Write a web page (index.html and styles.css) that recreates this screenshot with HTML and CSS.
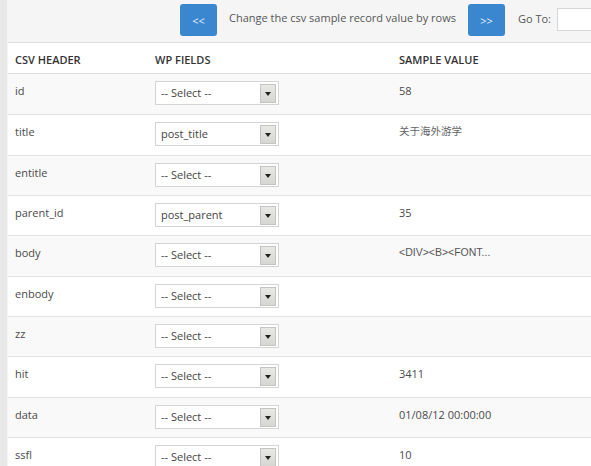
FILE: index.html
```html
<!DOCTYPE html>
<html>
<head>
<meta charset="utf-8">
<link rel="stylesheet" href="styles.css">
</head>
<body>
<div class="frame">
  <div class="toolbar">
    <button class="nav-btn">&lt;&lt;</button>
    <span class="hint">Change the csv sample record value by rows</span>
    <button class="nav-btn">&gt;&gt;</button>
    <span class="goto-label">Go To:</span>
    <input class="goto-input" type="text">
  </div>
  <div class="table">
    <div class="row head">
      <div class="cell c1">CSV HEADER</div>
      <div class="cell c2">WP FIELDS</div>
      <div class="cell c3">SAMPLE VALUE</div>
    </div>
    <div class="row odd">
      <div class="cell c1">id</div>
      <div class="cell c2"><div class="sel"><span>-- Select --</span><i class="arr"></i></div></div>
      <div class="cell c3">58</div>
    </div>
    <div class="row">
      <div class="cell c1">title</div>
      <div class="cell c2"><div class="sel"><span>post_title</span><i class="arr"></i></div></div>
      <div class="cell c3 cjk">关于海外游学</div>
    </div>
    <div class="row odd">
      <div class="cell c1">entitle</div>
      <div class="cell c2"><div class="sel"><span>-- Select --</span><i class="arr"></i></div></div>
      <div class="cell c3"></div>
    </div>
    <div class="row">
      <div class="cell c1">parent_id</div>
      <div class="cell c2"><div class="sel"><span>post_parent</span><i class="arr"></i></div></div>
      <div class="cell c3">35</div>
    </div>
    <div class="row odd">
      <div class="cell c1">body</div>
      <div class="cell c2"><div class="sel"><span>-- Select --</span><i class="arr"></i></div></div>
      <div class="cell c3 html">&lt;DIV&gt;&lt;B&gt;&lt;FONT...</div>
    </div>
    <div class="row">
      <div class="cell c1">enbody</div>
      <div class="cell c2"><div class="sel"><span>-- Select --</span><i class="arr"></i></div></div>
      <div class="cell c3"></div>
    </div>
    <div class="row odd">
      <div class="cell c1">zz</div>
      <div class="cell c2"><div class="sel"><span>-- Select --</span><i class="arr"></i></div></div>
      <div class="cell c3"></div>
    </div>
    <div class="row">
      <div class="cell c1">hit</div>
      <div class="cell c2"><div class="sel"><span>-- Select --</span><i class="arr"></i></div></div>
      <div class="cell c3">3411</div>
    </div>
    <div class="row odd">
      <div class="cell c1">data</div>
      <div class="cell c2"><div class="sel"><span>-- Select --</span><i class="arr"></i></div></div>
      <div class="cell c3">01/08/12 00:00:00</div>
    </div>
    <div class="row">
      <div class="cell c1">ssfl</div>
      <div class="cell c2"><div class="sel"><span>-- Select --</span><i class="arr"></i></div></div>
      <div class="cell c3">10</div>
    </div>
  </div>
</div>
</body>
</html>
```
FILE: styles.css
```css
html, body {
  margin: 0;
  padding: 0;
  background: #fff;
  overflow: hidden;
}
body {
  font-family: "Open Sans", "Noto Sans", "Noto Sans CJK SC", sans-serif;
  font-size: 11px;
  color: #444;
}
.frame {
  border-left: 7px solid #e8e8e8;
  padding-left: 1px;
  background: #f3f3f3;
  min-height: 466px;
  overflow: hidden;
}
.toolbar {
  height: 43px;
  box-sizing: border-box;
  background: #f5f5f5;
  border-bottom: 1px solid #dedede;
  display: flex;
  align-items: flex-start;
  padding-left: 172px;
  white-space: nowrap;
  overflow: hidden;
}
.table { background: #fff; }
.nav-btn {
  flex: none;
  margin-top: 4px;
  width: 37px;
  height: 32px;
  border: none;
  border-radius: 3px;
  background: #3a87cf;
  color: #e6f0fa;
  font-family: "Open Sans", sans-serif;
  font-size: 11px;
  padding: 0;
}
.hint {
  margin-left: 12px;
  margin-right: 12px;
  line-height: 36px;
  color: #555;
}
.goto-label {
  margin-left: 13px;
  line-height: 38px;
  color: #555;
}
.goto-input {
  flex: none;
  margin-left: 6px;
  margin-top: 8px;
  width: 60px;
  height: 23px;
  box-sizing: border-box;
  border: 1px solid #d6d6d6;
  background: #fff;
  padding: 0;
}
.row {
  display: grid;
  grid-template-columns: 139px 244px 1fr;
  border-top: 1px solid #e2e2e2;
  height: 40.33px;
  box-sizing: border-box;
}
.row.head {
  height: 31px;
  border-top: none;
  border-bottom: 1px solid #ddd;
}
.row.head + .row { border-top: none; }
.row.odd { background: #f9f9f9; }
.cell {
  padding: 7px 8px 0 8px;
  line-height: 19px;
  color: #4a4a4a;
}
.c1 { padding-left: 7px; }
.head .cell {
  padding-top: 7px;
  font-weight: 600;
  color: #333;
  font-size: 11px;
}
.c3.cjk { color: #666; font-size: 10.5px; }
.c3.html { font-family: "Liberation Sans", Arial, sans-serif; font-size: 10.5px; color: #555; }
.sel {
  width: 124px;
  height: 24px;
  box-sizing: border-box;
  border: 1px solid #d4d4d4;
  background: #fff;
  position: relative;
}
.sel span {
  display: block;
  padding-left: 5px;
  line-height: 22px;
  color: #444;
}
.arr {
  position: absolute;
  right: 2px;
  top: 2px;
  width: 14px;
  height: 17px;
  background: linear-gradient(#e8e8e6, #d6d6d2);
  border: 1px solid #c4c4c0;
}
.arr::after {
  content: "";
  position: absolute;
  left: 4px;
  top: 7px;
  border-left: 3px solid transparent;
  border-right: 3px solid transparent;
  border-top: 4px solid #222;
}
```
